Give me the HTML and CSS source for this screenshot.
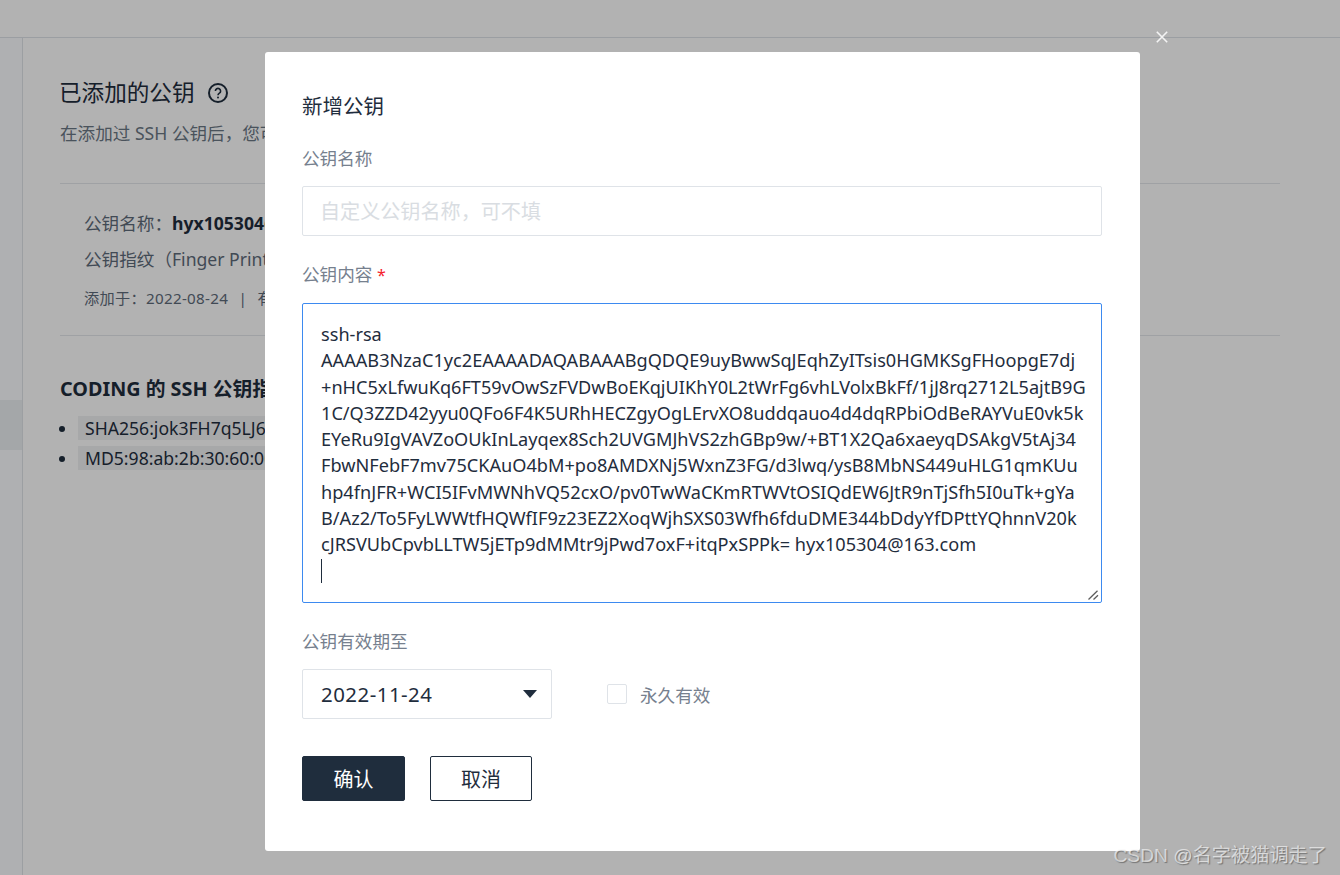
FILE: index.html
```html
<!DOCTYPE html>
<html lang="zh-CN">
<head>
<meta charset="utf-8">
<title>新增公钥</title>
<link rel="stylesheet" href="styles.css">
</head>
<body>
<div class="page">
  <header class="topbar"></header>
  <div class="body-row">
    <aside class="sidebar"><div class="side-active"></div></aside>
    <main class="content">
      <h2 class="heading">已添加的公钥
        <svg class="help" viewBox="0 0 20 20" width="20" height="20"><circle cx="10" cy="10" r="9" fill="none" stroke="currentColor" stroke-width="2"/><path d="M7.4 8a2.6 2.6 0 1 1 4 2.2c-.9.6-1.4 1-1.4 2" fill="none" stroke="currentColor" stroke-width="1.6"/><circle cx="10" cy="14.6" r="1" fill="currentColor"/></svg>
      </h2>
      <p class="desc">在添加过 SSH 公钥后，您可以通过 SSH 协议访问代码仓库</p>
      <section class="key">
        <p class="key-name">公钥名称：<b>hyx105304@163.com</b></p>
        <p class="key-print">公钥指纹（Finger Print）：</p>
        <p class="key-meta">添加于：2022-08-24 <span class="sep">|</span> 有效期至：2022-11-24</p>
      </section>
      <h3 class="sub">CODING 的 SSH 公钥指纹</h3>
      <ul class="prints">
        <li><code>SHA256:jok3FH7q5LJ6qvE7iPNehBgXRw51ErE77S0Dn+Vg/Ik</code></li>
        <li><code>MD5:98:ab:2b:30:60:00:82:86:bb:85:db:87:22:c4:4f:e1</code></li>
      </ul>
    </main>
  </div>
</div>

<div class="mask">
  <button class="close" type="button" aria-label="关闭">
    <svg viewBox="0 0 12 12" width="12" height="12"><path d="M.8.8l10.4 10.4M11.2.8L.8 11.2" stroke="#f4f4f4" stroke-width="1.6" fill="none"/></svg>
  </button>
  <form class="dialog">
    <h1 class="dialog-title">新增公钥</h1>
    <label class="label label-first">公钥名称</label>
    <input class="input" type="text" placeholder="自定义公钥名称，可不填">
    <label class="label label-content">公钥内容 <span class="req">*</span></label>
    <div class="area-wrap">
      <textarea class="area" wrap="off" spellcheck="false">ssh-rsa
AAAAB3NzaC1yc2EAAAADAQABAAABgQDQE9uyBwwSqJEqhZyITsis0HGMKSgFHoopgE7dj
+nHC5xLfwuKq6FT59vOwSzFVDwBoEKqjUIKhY0L2tWrFg6vhLVolxBkFf/1jJ8rq2712L5ajtB9G
1C/Q3ZZD42yyu0QFo6F4K5URhHECZgyOgLErvXO8uddqauo4d4dqRPbiOdBeRAYVuE0vk5k
EYeRu9IgVAVZoOUkInLayqex8Sch2UVGMJhVS2zhGBp9w/+BT1X2Qa6xaeyqDSAkgV5tAj34
FbwNFebF7mv75CKAuO4bM+po8AMDXNj5WxnZ3FG/d3lwq/ysB8MbNS449uHLG1qmKUu
hp4fnJFR+WCI5IFvMWNhVQ52cxO/pv0TwWaCKmRTWVtOSIQdEW6JtR9nTjSfh5I0uTk+gYa
B/Az2/To5FyLWWtfHQWfIF9z23EZ2XoqWjhSXS03Wfh6fduDME344bDdyYfDPttYQhnnV20k
cJRSVUbCpvbLLTW5jETp9dMMtr9jPwd7oxF+itqPxSPPk= hyx105304@163.com
</textarea>
      <span class="caret"></span>
      <svg class="grip" viewBox="0 0 11 10" width="11" height="10"><path d="M.5 9.5L9.5.8M5.5 9.5l4.5-4.2" stroke="#5c5c5c" stroke-width="1.3" fill="none"/></svg>
    </div>
    <label class="label label-date">公钥有效期至</label>
    <div class="date-row">
      <div class="select"><span>2022-11-24</span><i class="arrow"></i></div>
      <label class="check"><span class="box"></span>永久有效</label>
    </div>
    <div class="actions">
      <button class="btn btn-primary" type="button">确认</button>
      <button class="btn btn-ghost" type="button">取消</button>
    </div>
  </form>
</div>
<div class="watermark">CSDN @名字被猫调走了</div>
</body>
</html>
```
FILE: styles.css
```css
* { box-sizing: border-box; }
html, body { margin: 0; height: 100%; overflow: hidden; }
body {
  font-family: "Noto Sans", "Noto Sans CJK SC", sans-serif;
  color: #1f2d3d;
  background: #fff;
}
.page { height: 875px; display: flex; flex-direction: column; }
.topbar { height: 38px; border-bottom: 1px solid #dfe3e8; flex: none; background: #fff; }
.body-row { flex: 1; display: flex; }
.sidebar { width: 23px; flex: none; background: #fbfdff; border-right: 1px solid #e0e4e9; padding-top: 362px; }
.side-active { height: 50px; background: #ebeff3; }
.content { flex: 1; padding: 38px 0 0 37px; }
.heading { margin: 0 0 0 -1px; font-size: 22.6px; font-weight: 400; line-height: 34px; display: flex; align-items: center; gap: 13px; }
.help { color: #1f2d3d; }
.desc { margin: 8px 0 0; font-size: 17.6px; line-height: 30px; color: #6b7785; }
.key { margin-top: 35px; padding: 24px 24px 25px; border-top: 1px solid #e4e7eb; border-bottom: 1px solid #e4e7eb; width: 1220px; }
.key p { margin: 0; }
.key-name { font-size: 17.6px; line-height: 30px; color: #5e6b7a; }
.key-name b { color: #1f2d3d; }
.key-print { font-size: 17.6px; line-height: 30px; color: #5e6b7a; margin-top: 6px !important; }
.key-meta { font-size: 15.2px; line-height: 24px; color: #5e6b7a; margin-top: 12px !important; letter-spacing: .3px; }
.sep { margin: 0 6px; }
.sub { margin: 37px 0 0; font-size: 19.8px; line-height: 32px; font-weight: 700; }
.prints { margin: 8px 0 0; padding: 0 0 0 18px; font-size: 17.6px; line-height: 30px; }
.prints code { font-family: inherit; background: #eff1f3; padding: 0 7px; line-height: 24px; display: inline-block; }

.mask { position: absolute; inset: 0; background: rgba(0, 0, 0, .3); }
.close { position: absolute; left: 1156px; top: 31px; width: 12px; height: 12px; padding: 0; border: 0; background: none; display: block; }
.close svg { display: block; }
.dialog { position: absolute; left: 265px; top: 52px; width: 875px; height: 799px; background: #fff; border-radius: 3px; padding: 38px 38px 0 37px; display: flex; flex-direction: column; }
.dialog-title { margin: 0; font-size: 20.5px; font-weight: 400; line-height: 32px; color: #1f2d3d; }
.label { display: block; height: 28px; flex: none; font-size: 17.6px; line-height: 28px; color: #76808e; }
.label-first { margin-top: 22px; }
.label-content { margin-top: 24px; }
.label-date { margin-top: 24px; }
.req { color: #f5222d; font-size: 16px; }
.input { margin-top: 14px; height: 50px; width: 100%; border: 1px solid #dfe3e8; border-radius: 2px; padding: 0 17px; font: inherit; font-size: 20.1px; color: #1f2d3d; flex: none; outline: none; }
.input::placeholder { color: #d9dde2; opacity: 1; }
.area-wrap { position: relative; margin-top: 15px; height: 300px; flex: none; }
.area { display: block; width: 100%; height: 300px; border: 1px solid #3d8af0; border-radius: 2px; padding: 17px 18px 0; font: inherit; font-size: 18.15px; line-height: 26.3px; color: #1f2d3d; resize: none; outline: none; overflow: hidden; white-space: pre; }
.caret { position: absolute; left: 19px; top: 256px; width: 1px; height: 24px; background: #1f2d3d; }
.grip { position: absolute; left: 786px; top: 287px; }
.date-row { margin-top: 14px; display: flex; align-items: center; }
.select { width: 250px; height: 50px; border: 1px solid #dfe3e8; border-radius: 2px; padding: 0 20px 0 18px; display: flex; align-items: center; justify-content: space-between; font-size: 20.4px; letter-spacing: .5px; color: #1f2d3d; }
.arrow { width: 0; height: 0; border-left: 7px solid transparent; border-right: 7px solid transparent; border-top: 8px solid #1f2d3d; margin-right: -6px; }
.check { margin-left: 55px; display: flex; align-items: center; gap: 13px; font-size: 17.6px; color: #76808e; }
.box { width: 20px; height: 20px; border: 1px solid #dfe3e8; border-radius: 2px; }
.actions { margin-top: 37px; display: flex; gap: 25px; }
.btn { height: 45px; border-radius: 2px; font: inherit; font-size: 20px; padding: 0; }
.btn-primary { width: 103px; background: #1f2d3d; color: #fff; border: 1px solid #1f2d3d; }
.btn-ghost { width: 102px; background: #fff; color: #1f2d3d; border: 1px solid #1f2d3d; }
.watermark { position: absolute; right: 13px; top: 842px; font-size: 19.2px; line-height: 28px; color: rgba(255, 255, 255, .62); text-shadow: 1px 1px 1px rgba(0, 0, 0, .35); font-family: "Liberation Sans", "Noto Sans CJK SC", sans-serif; white-space: nowrap; }
```
